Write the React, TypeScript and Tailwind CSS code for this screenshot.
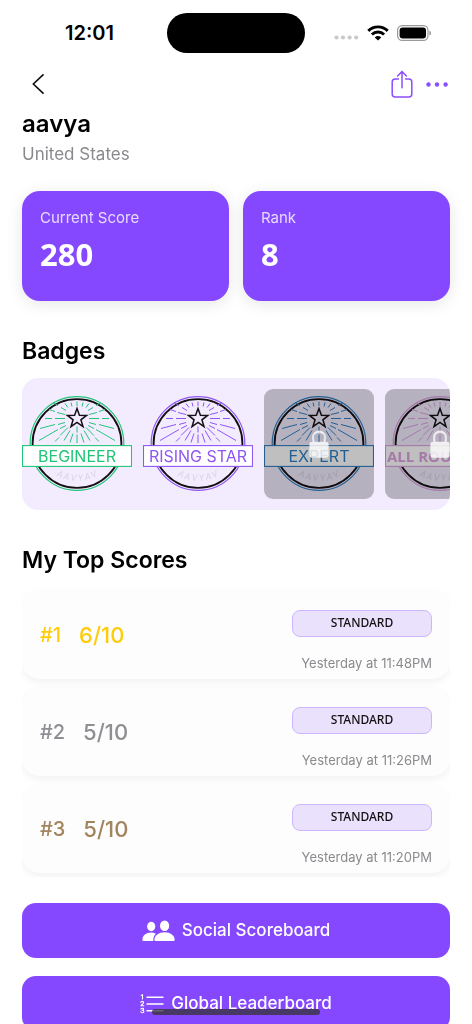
import clsx from 'clsx'

type BadgeProps = {
  label: string
  color: string
  locked?: boolean
  bold?: boolean
}

type Score = {
  rank: number
  score: string
  mode: string
  date: string
  className: string
}

const badges: BadgeProps[] = [
  { label: 'BEGINEER', color: '#22c578' },
  { label: 'RISING STAR', color: '#8f55f5' },
  { label: 'EXPERT', color: '#2f7fc4', locked: true },
  { label: 'ALL ROUNDER', color: '#dea0e2', locked: true, bold: true },
]

const scores: Score[] = [
  { rank: 1, score: '6/10', mode: 'STANDARD', date: 'Yesterday at 11:48PM', className: 'text-[#ffcc0a]' },
  { rank: 2, score: '5/10', mode: 'STANDARD', date: 'Yesterday at 11:26PM', className: 'text-[#8e8e93]' },
  { rank: 3, score: '5/10', mode: 'STANDARD', date: 'Yesterday at 11:20PM', className: 'text-[#a2845e]' },
]

// Dashes of the right half of the burst, relative to the star centre.
// The left half is the same set mirrored.
const rays = [
  [5, -12, 6, -16],
  [9, -11, 12, -15],
  [11, -8, 16, -11],
  [19, -13, 24, -16],
  [12, -4, 20, -6],
  [22, -7, 28, -9],
  [12, 0, 22, 0],
  [25, 0, 32, 0],
  [12, 4, 19, 6],
  [22, 6, 37, 10],
  [11, 7, 17, 10],
  [19, 11, 38, 22],
  [9, 9, 17, 17],
  [18, 19, 22, 23],
  [7, 12, 13, 22],
  [4, 15, 7, 24],
]

const arcLetters = ['A', 'A', 'V', 'Y', 'A', 'V']

function BadgeArt({ label, color, bold }: BadgeProps) {
  return (
    <svg viewBox="0 0 110 110" className="block size-full" role="img" aria-label={label}>
      <circle cx="55" cy="54.5" r="46.8" fill="none" stroke={color} strokeWidth="1.2" />
      <circle cx="55" cy="54.5" r="44.4" fill="none" stroke="#151015" strokeWidth="1.9" />
      <g stroke={color} strokeWidth="1" transform="translate(55 29.5)">
        {rays.map(([x1, y1, x2, y2]) => (
          <g key={`${x1},${y1}`}>
            <line x1={x1} y1={y1} x2={x2} y2={y2} />
            <line x1={-x1} y1={y1} x2={-x2} y2={y2} />
          </g>
        ))}
        <line x1="0" y1="-17" x2="0" y2="-12.5" />
        <line x1="0" y1="8" x2="0" y2="14" />
        <line x1="0" y1="16" x2="0" y2="24.5" />
      </g>
      <path
        d="M55 19.4 57.4 26.2 64.6 26.4 58.9 30.8 61 37.6 55 33.5 49 37.6 51.1 30.8 45.4 26.4 52.6 26.2Z"
        fill="none"
        stroke="#151015"
        strokeWidth="1.5"
      />
      <rect x="0.5" y="56.6" width="109" height="20.8" fill="#fff" stroke={color} strokeWidth="1.1" />
      <text
        x="55"
        y="72.7"
        textAnchor="middle"
        fill={color}
        className={clsx(
          bold
            ? "font-['Open_Sans',sans-serif] text-[15px] font-bold"
            : "font-['Inter',sans-serif] text-base"
        )}
      >
        {label}
      </text>
      {arcLetters.map((letter, i) => (
        <text
          key={i}
          x="55"
          y="92"
          textAnchor="middle"
          fill="#d9d2e2"
          transform={`rotate(${25 - i * 10} 55 49)`}
          className="font-['Lato',sans-serif] text-[9px] italic"
        >
          {letter}
        </text>
      ))}
    </svg>
  )
}

function LockIcon() {
  return (
    <svg viewBox="0 0 20 28" className="h-7 w-5" aria-hidden="true">
      <path d="M4.2 12V7.4a5.8 5.8 0 0 1 11.6 0V12" fill="none" stroke="#fff" strokeWidth="2.2" />
      <rect x="0.4" y="11.8" width="19.2" height="16" rx="2.4" fill="#fff" />
    </svg>
  )
}

function Badge(props: BadgeProps) {
  return (
    <li className="relative size-[110px] shrink-0">
      <BadgeArt {...props} />
      {props.locked && (
        <div className="absolute inset-0 flex items-center justify-center rounded-[9px] bg-black/25">
          <span className="opacity-80">
            <LockIcon />
          </span>
        </div>
      )}
    </li>
  )
}

function StatusBar() {
  return (
    <div className="grid h-[66px] shrink-0 grid-cols-[1fr_138px_1fr] items-center">
      <span className="pl-3 text-center text-xl font-semibold">12:01</span>
      <span className="h-10 rounded-full bg-black" />
      <div className="flex items-center justify-center gap-2 pr-3">
        <svg viewBox="0 0 25 5" className="mt-2 h-[5px] w-[25px]" fill="#c9c9ca">
          <circle cx="2.5" cy="2.5" r="2.1" />
          <circle cx="9" cy="2.5" r="2.1" />
          <circle cx="15.6" cy="2.5" r="2.1" />
          <circle cx="22.2" cy="2.5" r="2.1" />
        </svg>
        <svg viewBox="0 0 22 16" className="h-4 w-[22px]">
          <g fill="none" stroke="#000" strokeWidth="2.9">
            <path d="M1.3 5.9a13.8 13.8 0 0 1 19.4 0" />
            <path d="M4.9 9.5a8.7 8.7 0 0 1 12.2 0" />
          </g>
          <path d="M11 15.6 7.8 12.4a4.6 4.6 0 0 1 6.4 0Z" />
        </svg>
        <svg viewBox="0 0 35 16" className="h-4 w-[35px]">
          <rect x="0.6" y="0.6" width="30.4" height="14.8" rx="4.6" fill="none" stroke="#999" strokeWidth="1.2" />
          <rect x="2.6" y="2.6" width="26.4" height="10.8" rx="3" />
          <path d="M32.4 5.4c2.2.8 2.2 4.4 0 5.2Z" fill="#999" />
        </svg>
      </div>
    </div>
  )
}

function NavBar() {
  return (
    <nav className="flex h-9 shrink-0 items-center justify-between pr-[23px] pl-7">
      <button type="button" aria-label="Back" className="flex size-5 items-center justify-center">
        <svg viewBox="0 0 12 20" className="h-5 w-3" fill="none" stroke="#111" strokeWidth="1.7" strokeLinecap="round" strokeLinejoin="round">
          <path d="M11 .9 1.3 10l9.7 9.2" />
        </svg>
      </button>
      <div className="flex items-center gap-[13px]">
        <button type="button" aria-label="Share">
          <svg viewBox="0 0 22 28" className="h-7 w-[22px]" fill="none" stroke="#8a4dff" strokeWidth="1.5" strokeLinecap="round" strokeLinejoin="round">
            <path d="M7.4 9H4.2A3 3 0 0 0 1.2 12v12a3 3 0 0 0 3 3h13.6a3 3 0 0 0 3-3V12a3 3 0 0 0-3-3h-3.2" />
            <path d="M11 17.8V1.6M6.6 6 11 1.4 15.4 6" />
          </svg>
        </button>
        <button type="button" aria-label="More">
          <svg viewBox="0 0 23 5" className="h-[5px] w-[23px]" fill="#8a4dff">
            <circle cx="2.5" cy="2.5" r="2.2" />
            <circle cx="11" cy="2.5" r="2.2" />
            <circle cx="19.6" cy="2.5" r="2.2" />
          </svg>
        </button>
      </div>
    </nav>
  )
}

function StatCard({ label, value }: { label: string; value: string }) {
  return (
    <div className="flex-1 rounded-[18px] bg-[#8548ff] px-[18px] pt-[17px] pb-[27px] shadow-[0_3px_16px_rgba(0,0,0,0.1)]">
      <p className="text-[15px] leading-5 text-white/80">{label}</p>
      <p className="mt-[6px] font-['Noto_Sans',sans-serif] text-[31px] leading-10 font-bold text-white">{value}</p>
    </div>
  )
}

function ScoreRow({ rank, score, mode, date, className }: Score) {
  return (
    <li className="flex h-[88px] items-center justify-between rounded-[18px] bg-[#fdfdfd] px-[18px] shadow-[0_3px_8px_rgba(0,0,0,0.06)]">
      <div className={clsx('flex items-center gap-[18px] font-medium', className)}>
        <span className="text-xl">#{rank}</span>
        <span className="text-[22px]">{score}</span>
      </div>
      <div className="flex flex-col items-end gap-[18px] pt-[10px]">
        <span className="flex h-[27px] w-[140px] items-center justify-center rounded-lg border border-[#cdb6ff] bg-[#eae1fd] font-['Noto_Sans',sans-serif] text-xs font-medium text-[#111]">
          {mode}
        </span>
        <time className="text-[13px] leading-4 text-[#8a8a8e]">{date}</time>
      </div>
    </li>
  )
}

function PeopleIcon() {
  return (
    <svg viewBox="0 0 33 22" className="h-[22px] w-[33px]">
      <g fill="#fff">
        <ellipse cx="9.2" cy="6.5" rx="4.1" ry="4.7" />
        <path d="M.4 19.8c0-4.2 4-7.2 8.7-7.2 1.8 0 3.4.4 4.8 1.2-1.8 1.7-2.7 3.8-2.6 7.2H1.8c-1 0-1.4-.4-1.4-1.2Z" />
        <ellipse cx="22.6" cy="5.7" rx="4.6" ry="5.3" />
        <path d="M12.4 19.8c0-4.4 4.6-7.6 10.2-7.6s10.1 3.2 10.1 7.6c0 .9-.5 1.3-1.5 1.3H13.9c-1 0-1.5-.4-1.5-1.3Z" />
      </g>
    </svg>
  )
}

function NumberListIcon() {
  return (
    <svg viewBox="0 0 24 22" className="h-[22px] w-6" fill="none" stroke="#fff" strokeLinecap="round" strokeLinejoin="round">
      <path d="M7 4.2h16M7 11h16M7 17.8h16" strokeWidth="1.4" />
      <g strokeWidth="1.1">
        <path d="M1.2 2.4 2.5 1.6V6" />
        <path d="M.8 9.5c.2-1.5 2.8-1.5 2.8.1C3.6 10.7 1.6 11.5.9 12.8h2.9" />
        <path d="M.9 16.1c.4-1.2 2.8-1.1 2.7.2 0 .8-.7 1-1.5 1 .9 0 1.8.3 1.8 1.3 0 1.5-2.8 1.6-3.2.1" />
      </g>
    </svg>
  )
}

function ActionButton({ icon, children }: { icon: React.ReactNode; children: React.ReactNode }) {
  return (
    <button
      type="button"
      className="flex h-[55px] w-full items-center justify-center gap-[7px] rounded-[14px] bg-[#8548ff] text-[17px] font-medium text-white"
    >
      {icon}
      {children}
    </button>
  )
}

export default function App() {
  return (
    <div className="relative flex h-screen flex-col overflow-hidden bg-white font-['Inter',sans-serif] text-black">
      <StatusBar />
      <NavBar />

      <main className="min-h-0 flex-1 overflow-y-auto px-[22px] pb-10 [scrollbar-width:none]">
        <h1 className="mt-[6px] text-2xl leading-8 font-semibold">aavya</h1>
        <p className="mt-[2px] text-[17px] leading-6 text-[#8a8a8e]">United States</p>

        {/* Stats */}
        <section className="mt-[25px] flex gap-[14px]">
          <StatCard label="Current Score" value="280" />
          <StatCard label="Rank" value="8" />
        </section>

        {/* Badges */}
        <section className="mt-[35px]">
          <h2 className="text-[23px] leading-[30px] font-semibold">Badges</h2>
          <ul className="mt-3 flex gap-[11px] overflow-x-auto rounded-2xl bg-[#f3ecff] py-[11px] [scrollbar-width:none]">
            {badges.map((badge) => (
              <Badge key={badge.label} {...badge} />
            ))}
          </ul>
        </section>

        {/* Top scores */}
        <section className="mt-[35px]">
          <h2 className="text-[23px] leading-[30px] font-semibold">My Top Scores</h2>
          <ul className="mt-3 flex flex-col gap-[9px] overflow-hidden py-1">
            {scores.map((score) => (
              <ScoreRow key={score.rank} {...score} />
            ))}
          </ul>
        </section>

        <div className="mt-[26px] flex flex-col gap-[18px]">
          <ActionButton icon={<PeopleIcon />}>Social Scoreboard</ActionButton>
          <ActionButton icon={<NumberListIcon />}>Global Leaderboard</ActionButton>
        </div>
      </main>

      {/* Home indicator */}
      <div className="absolute bottom-[9px] left-1/2 h-[6px] w-[168px] -translate-x-1/2 rounded-full bg-[#333]/75" />
    </div>
  )
}
